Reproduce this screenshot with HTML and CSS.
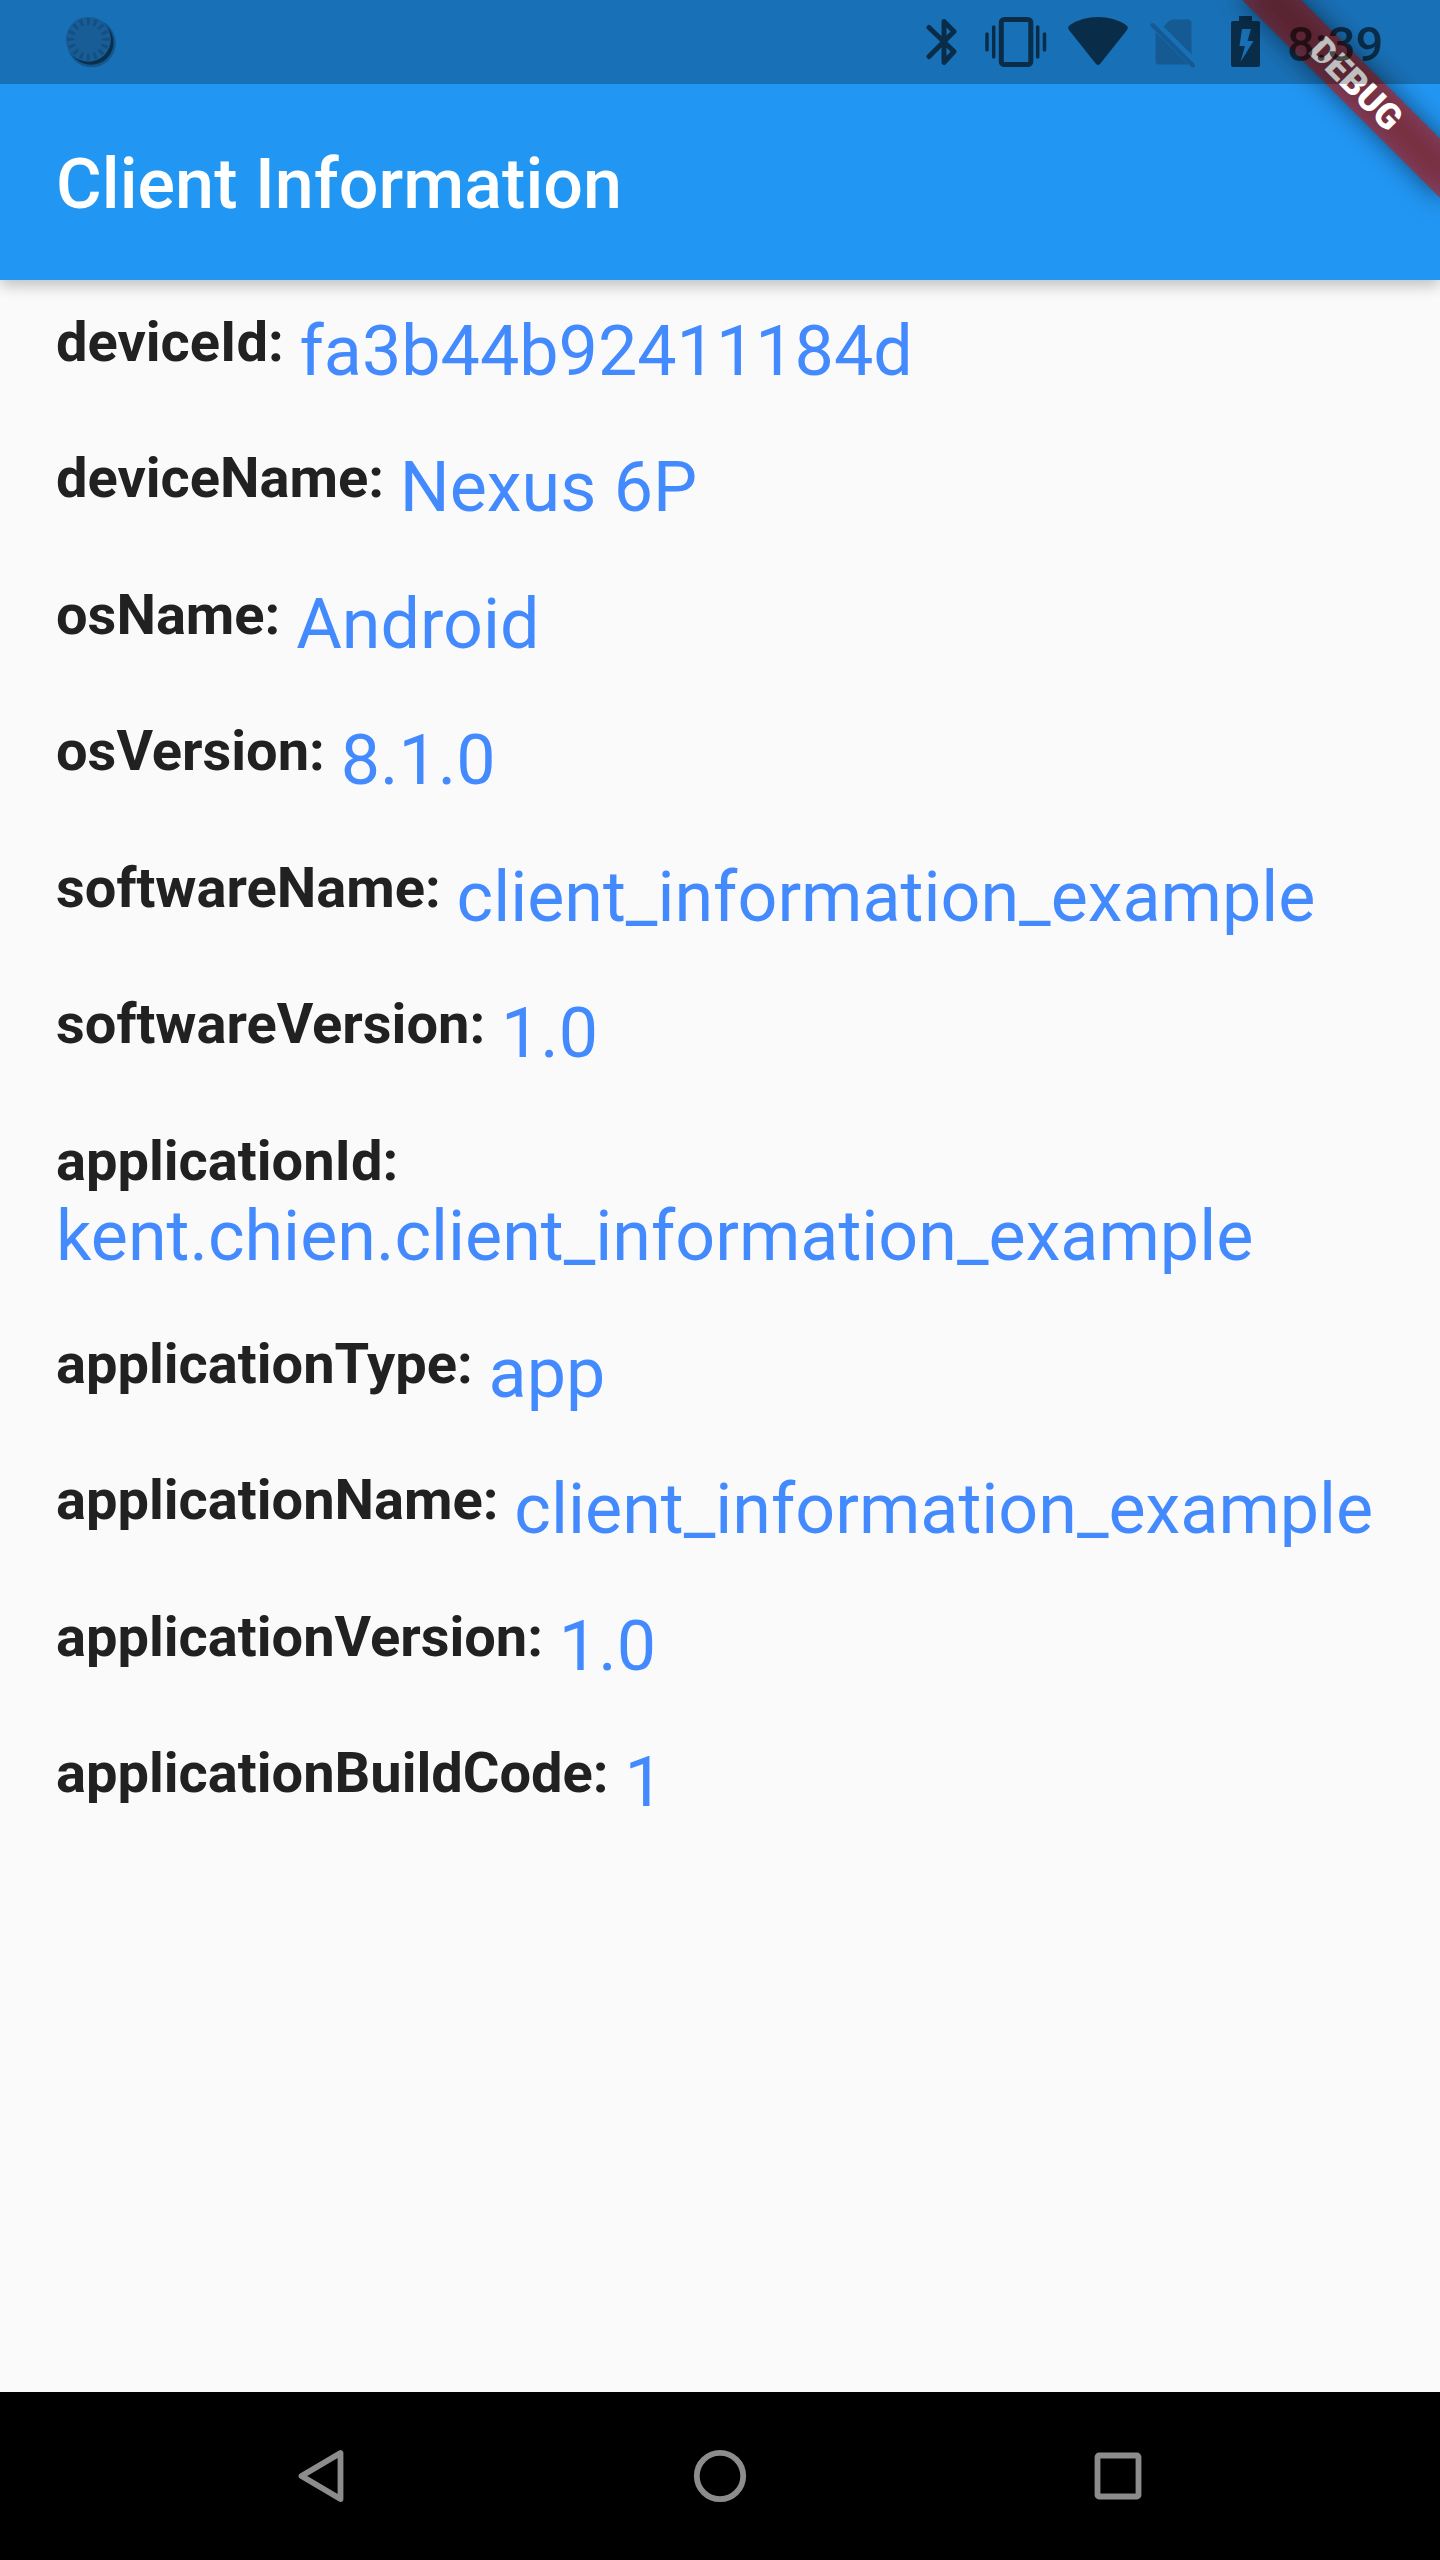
FILE: index.html
```html
<!DOCTYPE html>
<html lang="en">
<head>
<meta charset="utf-8">
<title>Client Information</title>
<link rel="stylesheet" href="styles.css">
</head>
<body>
<div class="screen">
  <header class="header">
    <div class="status">
      <svg class="notice" width="54" height="54" viewBox="0 0 54 54">
        <circle cx="26.500" cy="26" r="24.300" fill="#000" fill-opacity=".22"/>
        <circle cx="26" cy="25.300" r="22.500" fill="#0a2e4b"/>
        <circle cx="23.300" cy="22.300" r="22.500" fill="#185d96"/>
        <circle class="ticks" cx="23.300" cy="22.300" r="17.700" pathLength="160"/>
      </svg>
      <div class="tray">
        <svg class="icon bt" width="32" height="50" viewBox="0 0 32 50"><path d="M3 10.500L28 34.500L18 45.500V4.500L28 14.500L3 39.500"/></svg>
        <svg class="icon vib" width="62" height="50" viewBox="0 0 62 50"><rect x="16.300" y="2.500" width="29.500" height="45" rx="3"/><path class="bars" d="M2 17V33M8.700 10V40M52.700 10V40M59.500 17V33"/></svg>
        <svg class="solid wifi" width="60" height="49" viewBox="0 0 60 49"><path d="M1 13Q-1 10 2 8Q14 0 30 0T58 8Q61 10 59 13L32 47Q30 49 28 47Z"/></svg>
        <svg class="solid sim" width="46" height="50" viewBox="0 0 46 50"><path d="M13.500 7.500L19 2Q21 .5 23 .5H38Q41.500 .5 41.500 4V35.500ZM5.500 13L38.500 45.500H9Q5.500 45.500 5.500 42Z"/><path class="slash" d="M2.500 6L43 46.500"/></svg>
        <svg class="solid bat" width="29" height="51" viewBox="0 0 29 51"><path fill-rule="evenodd" d="M8 0H21V5H27Q29 5 29 7V49Q29 51 27 51H2Q0 51 0 49V7Q0 5 2 5H8ZM11 13L8.500 30H14L9.500 46L22.500 25H16.500L20 13Z"/></svg>
        <span class="clock">8:39</span>
      </div>
    </div>
    <h1 class="title">Client Information</h1>
    <div class="debug"><span>DEBUG</span></div>
  </header>
  <main class="list">
    <div class="row"><b>deviceId:</b><span>fa3b44b92411184d</span></div>
    <div class="row"><b>deviceName:</b><span>Nexus 6P</span></div>
    <div class="row"><b>osName:</b><span>Android</span></div>
    <div class="row"><b>osVersion:</b><span>8.1.0</span></div>
    <div class="row"><b>softwareName:</b><span>client_information_example</span></div>
    <div class="row"><b>softwareVersion:</b><span>1.0</span></div>
    <div class="row"><b>applicationId:</b><span>kent.chien.client_information_example</span></div>
    <div class="row"><b>applicationType:</b><span>app</span></div>
    <div class="row"><b>applicationName:</b><span>client_information_example</span></div>
    <div class="row"><b>applicationVersion:</b><span>1.0</span></div>
    <div class="row"><b>applicationBuildCode:</b><span>1</span></div>
  </main>
  <nav class="nav">
    <svg width="56" height="56" viewBox="0 0 56 56"><path d="M46.500 5V51L7.500 28Z"/></svg>
    <svg width="56" height="56" viewBox="0 0 56 56"><circle cx="28" cy="28" r="23.200"/></svg>
    <svg width="56" height="56" viewBox="0 0 56 56"><rect x="7.500" y="7.500" width="41" height="41" rx="1.500"/></svg>
  </nav>
</div>
</body>
</html>
```
FILE: styles.css
```css
* { box-sizing: border-box; }

body {
  margin: 0;
  background: #fafafa;
  font-family: Roboto, "Liberation Sans", sans-serif;
}

.screen {
  display: flex;
  flex-direction: column;
  width: 1440px;
  height: 2560px;
  overflow: hidden;
}

.header {
  position: relative;
  height: 280px;
  background: #2196f3;
  box-shadow: 0 5px 14px rgba(0, 0, 0, .2), 0 6px 18px rgba(0, 0, 0, .06);
}

.status {
  position: relative;
  z-index: 2;
  display: flex;
  justify-content: space-between;
  height: 84px;
  padding: 17px 57px 0 65px;
  background: rgba(0, 0, 0, .25);
}

.ticks {
  fill: none;
  stroke: #134f82;
  stroke-width: 7;
  stroke-dasharray: 4 6;
  stroke-dashoffset: 2;
}

.tray { display: flex; align-items: flex-start; }

.icon { fill: none; stroke: rgba(0, 0, 0, .6); stroke-width: 5; stroke-linecap: round; stroke-linejoin: round; }
.icon .bars { stroke-width: 3.5; }
.solid { fill: rgba(0, 0, 0, .6); }
.vib { margin-left: 27px; }
.wifi { margin-left: 21px; }
.sim { margin: 2px 0 0 22px; fill: #155a92; }
.slash { stroke: #155a92; stroke-width: 4; stroke-linecap: round; }
.bat { margin: -1px 0 0 35px; }

.clock {
  width: 96px;
  margin-left: 27px;
  color: rgba(0, 0, 0, .6);
  font-size: 49px;
  font-weight: 500;
  line-height: 55px;
}

.title {
  margin: 0;
  padding-left: 56px;
  color: #fff;
  font-size: 70px;
  font-weight: 500;
  line-height: 200px;
  letter-spacing: .06px;
}

/* Diagonal ribbon over the top-right corner */
.debug {
  position: absolute;
  top: 0;
  right: 0;
  z-index: 1;
  width: 280px;
  height: 280px;
  overflow: hidden;
}

.debug::before,
.debug span {
  position: absolute;
  top: 98px;
  left: 140px;
  width: 280px;
  height: 42px;
  transform: rotate(45deg);
  transform-origin: 140px -98px;
}

.debug::before {
  content: "";
  background: rgba(0, 0, 0, .5);
  filter: blur(12.6px);
}

.debug span {
  background: rgba(183, 28, 28, .627);
  color: #fff;
  font-size: 35.7px;
  font-weight: 900;
  line-height: 42px;
  text-align: center;
}

.list { flex: 1; padding: 28.8px 56px 0; }

.row {
  display: flex;
  flex-wrap: wrap;
  column-gap: 15.8px;
  align-items: flex-start;
  margin-bottom: 56px;
}

.row b {
  color: #212121;
  font-size: 56px;
  font-weight: 700;
  line-height: 66.5px;
}

.row span {
  height: 80.5px;
  color: #448aff;
  font-size: 70px;
  line-height: 84px;
}

.nav {
  display: flex;
  justify-content: center;
  align-items: center;
  gap: 342px;
  height: 168px;
  background: #000;
}

.nav svg { fill: none; stroke: #8c8c8c; stroke-width: 5.8; stroke-linejoin: round; }
```
